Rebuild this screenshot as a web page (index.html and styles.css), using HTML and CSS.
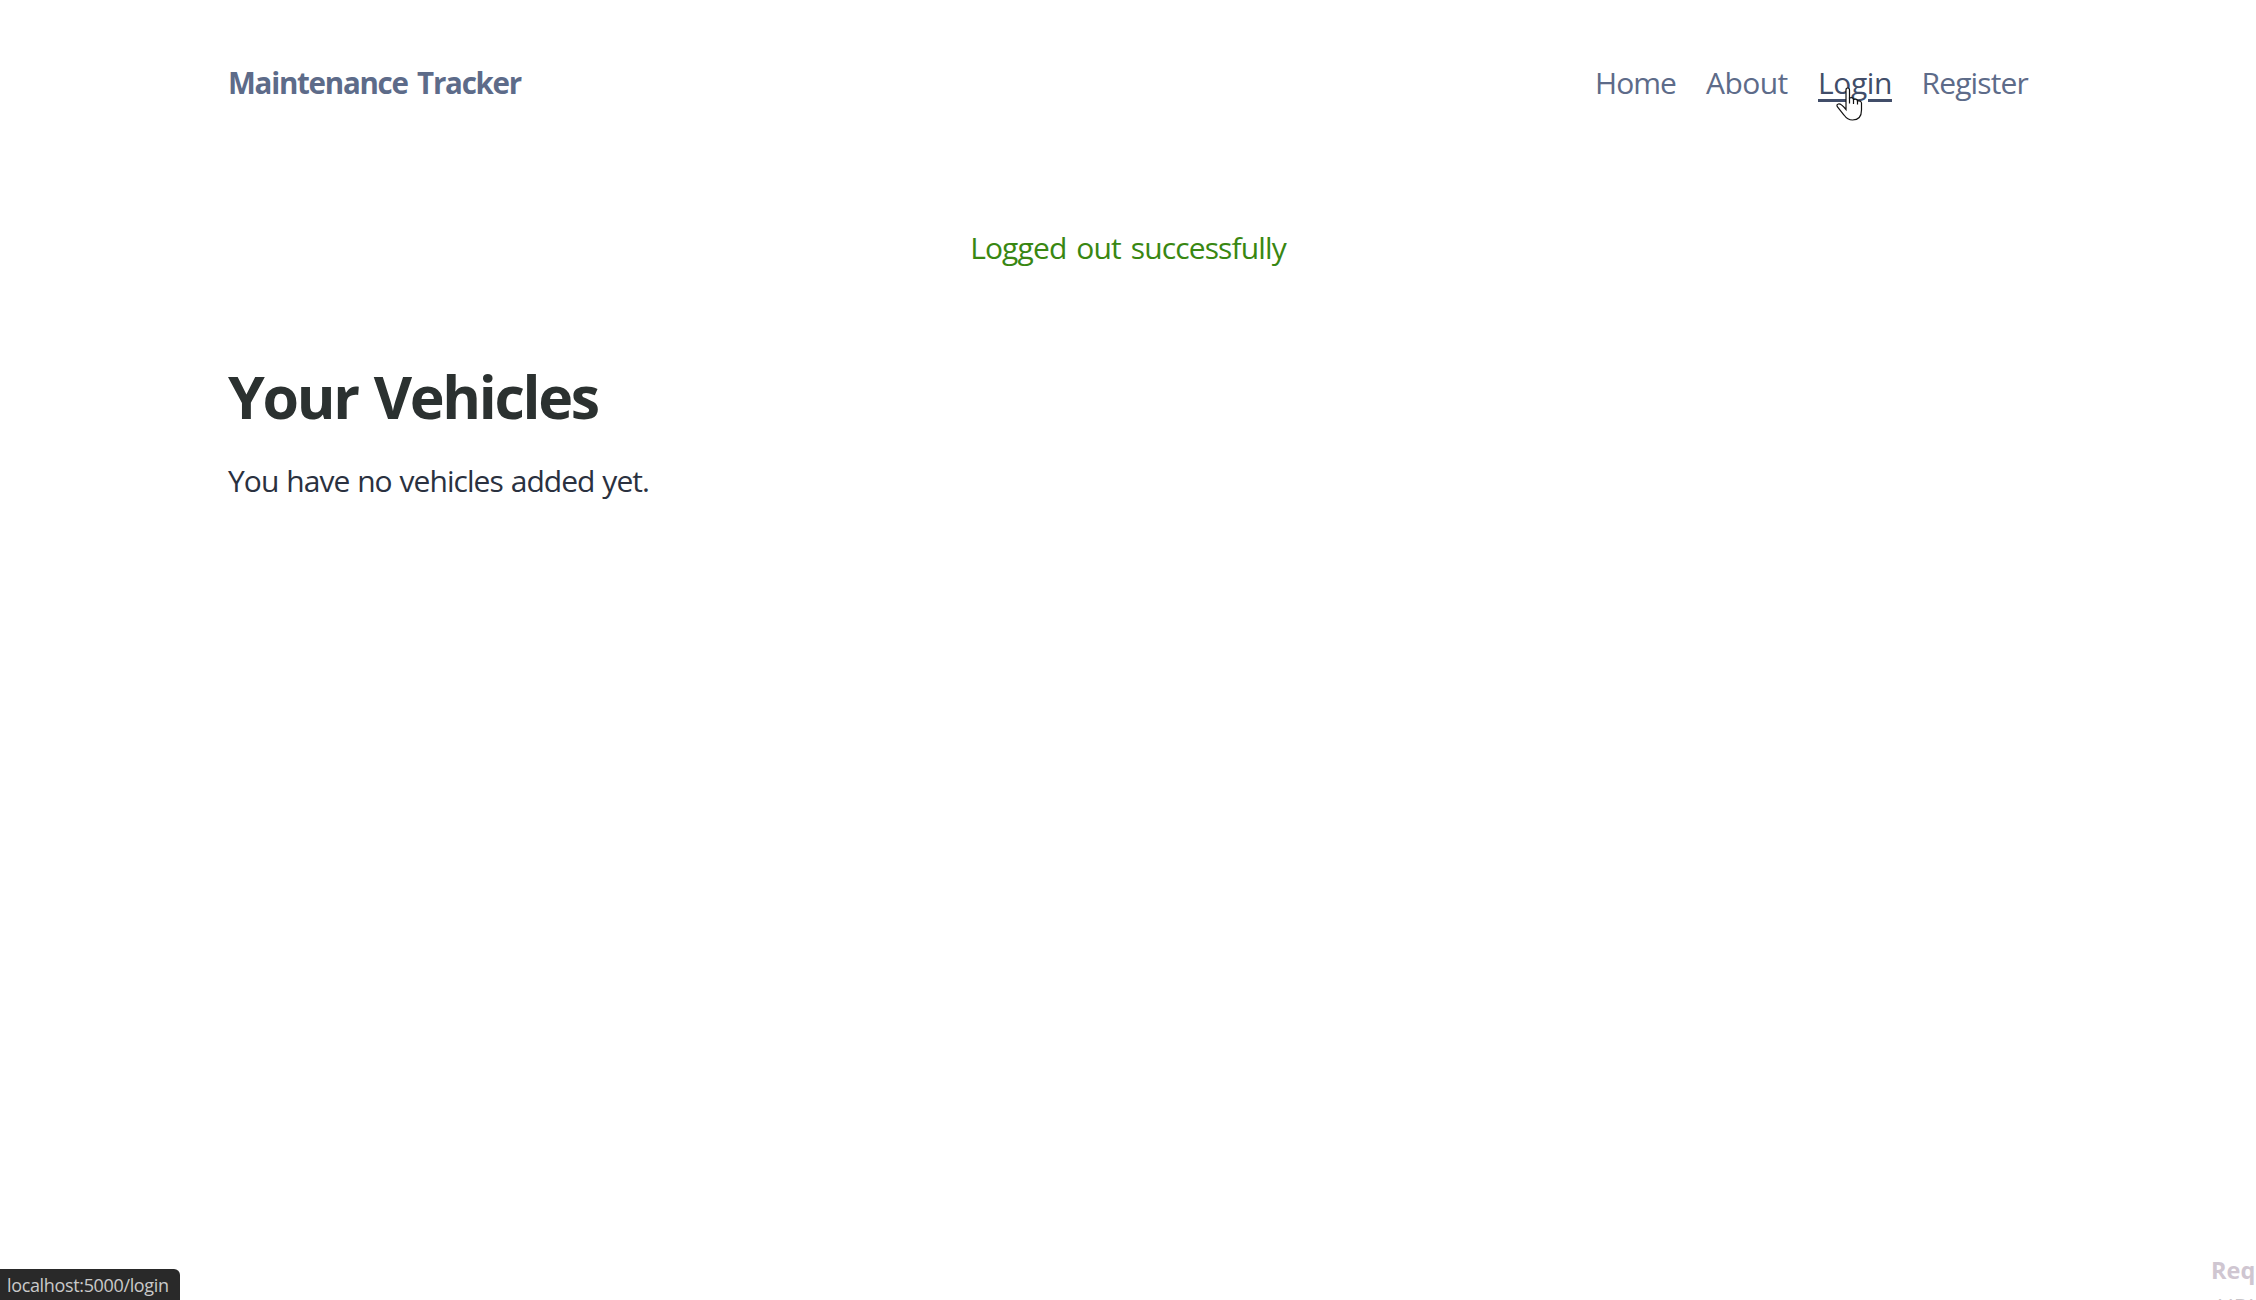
FILE: index.html
```html
<!DOCTYPE html>
<html lang="en">
<head>
<meta charset="utf-8">
<title>Maintenance Tracker</title>
<link rel="stylesheet" href="styles.css">
</head>
<body>
<nav class="nav container">
  <a class="brand">Maintenance Tracker</a>
  <div class="links">
    <a class="home">Home</a><a class="about">About</a><a class="login">Login</a><a class="register">Register</a>
  </div>
</nav>
<main class="container">
  <p class="flash">Logged out successfully</p>
  <h1>Your Vehicles</h1>
  <p class="empty">You have no vehicles added yet.</p>
</main>
<svg class="cursor" viewBox="0 0 28 34" width="28" height="34"><path d="M10 19.500V3q0-2 1.750-2T13.500 3v8q3.800-1 4 1.500 3.800-1 4 1.500 3.700-.5 4 2v7q0 10-9 10-5 0-8.500-5L1.500 20q-1.500-2.500 1-3 2.500-.5 7.500 5.500z" fill="#fff" stroke="#111" stroke-width="1.200"/><path d="M13.500 10.500v6M17.500 12v5M21.500 13.500v4" stroke="#111" stroke-width="1.200" fill="none"/></svg>
<div class="status">localhost:5000/login</div>
<div class="panel"><b>Req</b><span>URL</span></div>
</body>
</html>
```
FILE: styles.css
```css
* { box-sizing: border-box; }
body { margin: 0; height: 1300px; overflow: hidden; position: relative; background: #fff; font: 30px/45px "Open Sans", "Noto Sans", sans-serif; color: #2a3140; }
.container { width: 1800px; margin: 0 auto; }
.nav { display: flex; justify-content: space-between; padding-top: 60px; color: #5d6b89; }
.brand { font-weight: 700; font-size: 29.5px; letter-spacing: -1.25px; word-spacing: 3px; }
.links { display: flex; gap: 30px; }
.links a { white-space: nowrap; }
.home { width: 81px; letter-spacing: -.95px; }
.about { width: 82px; letter-spacing: -.55px; }
.login { width: 73.5px; letter-spacing: -.4px; color: #414d69; text-decoration: underline; text-decoration-thickness: 3px; text-underline-offset: 5px; }
.register { width: 106.5px; letter-spacing: -.85px; }
p, h1 { margin: 0; }
.flash { margin-top: 120px; text-align: center; letter-spacing: -.87px; word-spacing: 3px; color: #398712; }
h1 { margin-top: 92px; font-size: 59px; line-height: 68px; letter-spacing: -2.3px; word-spacing: 3px; color: #2b3130; }
.empty { margin-top: 28px; letter-spacing: -.95px; word-spacing: 1px; }
.cursor { position: absolute; left: 1836px; top: 87px; }
.status { position: absolute; left: 0; bottom: 0; width: 180px; height: 31px; padding-left: 7px; border-radius: 0 6px 0 0; background: #292929; color: #c9c9c9; font-size: 18px; line-height: 33px; letter-spacing: -.35px; }
.panel { position: absolute; left: 2211px; top: 1255px; width: 45px; height: 45px; color: #cfc6d1; font-size: 23.5px; line-height: 32px; overflow: hidden; }
.panel b, .panel span { display: block; }
.panel b { margin-top: -1px; }
.panel span { padding-left: 6px; font-size: 23px; line-height: 32px; margin-top: 5px; color: #c8c4c8; }
```
